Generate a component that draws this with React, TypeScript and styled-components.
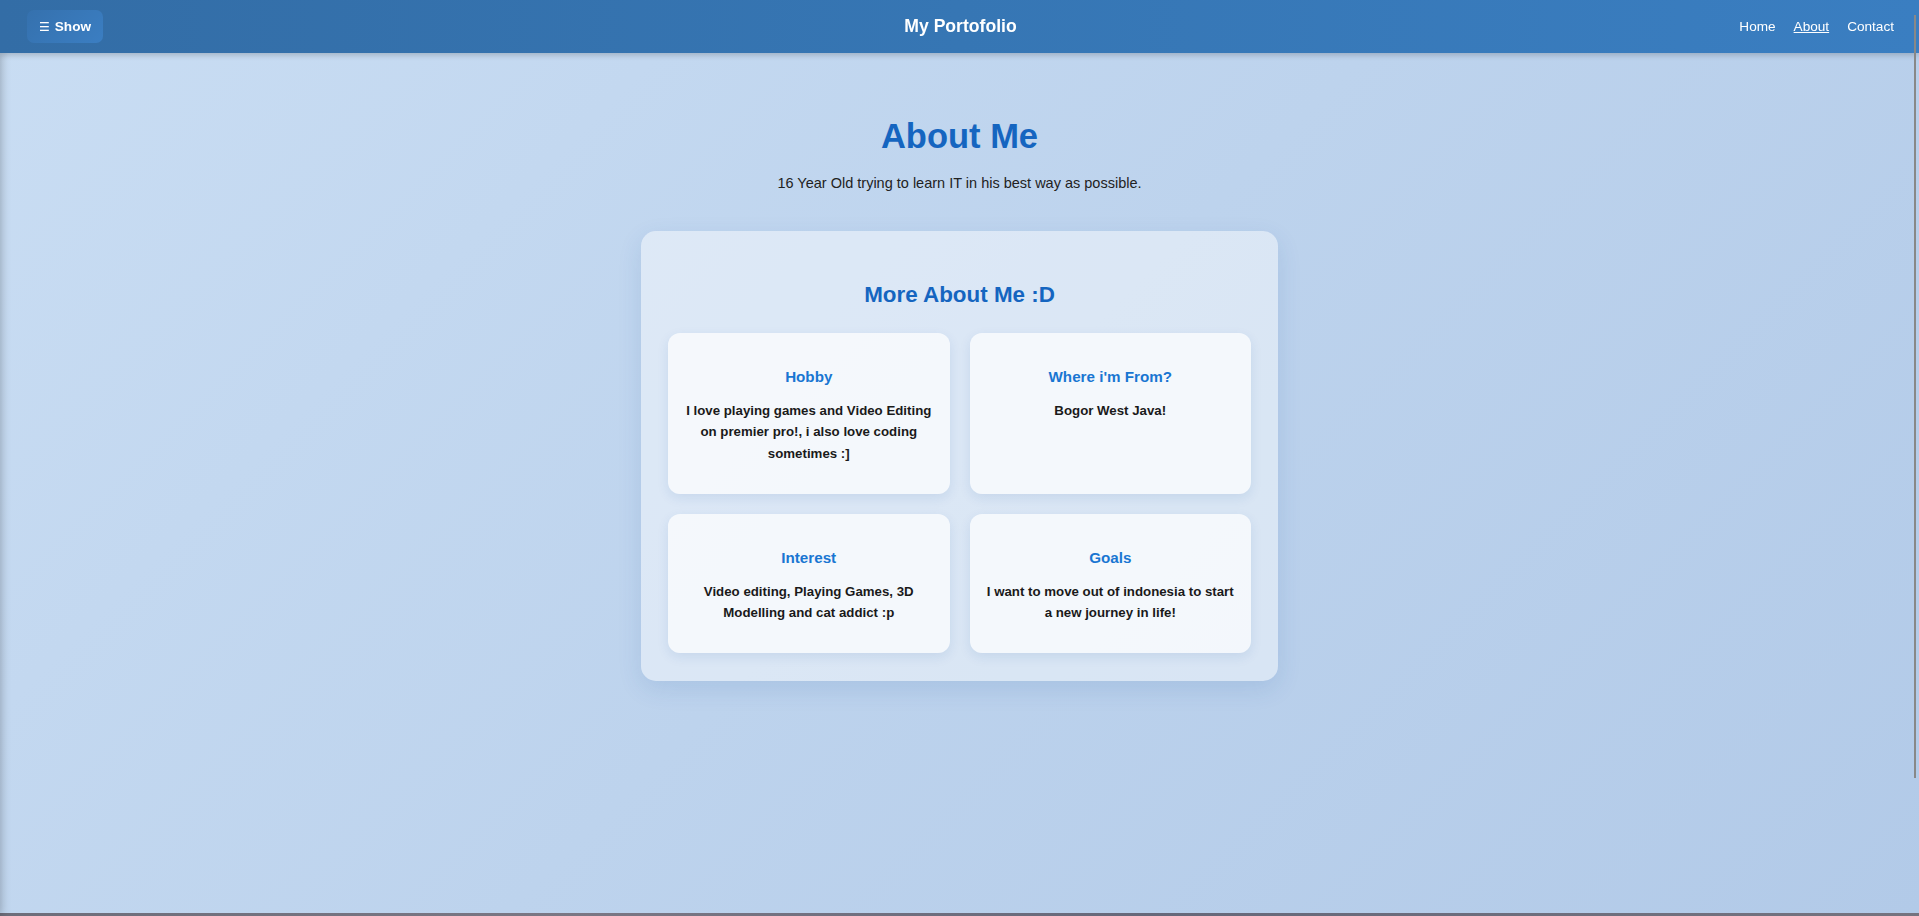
import React from "react";
import styled, { createGlobalStyle } from "styled-components";

const GlobalStyle = createGlobalStyle`
  *, *::before, *::after { box-sizing: border-box; }
  html, body { margin: 0; padding: 0; height: 100%; overflow: hidden; }
  body { font-family: "Liberation Sans", Arial, sans-serif; color: #1f1f1f; }
  #root { height: 100%; }
`;

const Shell = styled.div`
  height: 100vh;
  display: flex;
  flex-direction: column;
  background: linear-gradient(135deg, #c9ddf3 0%, #bdd3ed 50%, #b2cae8 100%);
`;

const Sidebar = styled.aside`
  position: fixed;
  top: 0;
  left: -250px;
  width: 250px;
  height: 100%;
  background: #2f6aa3;
  box-shadow: 0 0 10px rgba(0, 0, 0, 0.3);
  z-index: 5;
`;

const Header = styled.header`
  position: relative;
  z-index: 10;
  flex: none;
  height: 53px;
  display: grid;
  grid-template-columns: 1fr auto 1fr;
  align-items: center;
  padding: 0 25px 0 27px;
  background: linear-gradient(90deg, #336da6 0%, #3676b4 50%, #3a7ec1 100%);
  box-shadow: 0 2px 6px rgba(0, 0, 0, 0.2);
  color: #fff;
`;

const MenuButton = styled.button`
  justify-self: start;
  height: 33px;
  display: flex;
  align-items: center;
  gap: 5px;
  padding: 0 12px;
  border: none;
  border-radius: 7px;
  background: linear-gradient(135deg, #3571ae, #3b7ec2);
  color: #fff;
  font-family: "Liberation Sans", Arial, sans-serif;
  font-size: 13.6px;
  font-weight: bold;
  cursor: pointer;
`;

const MenuGlyph = styled.span`
  font-family: "DejaVu Sans", sans-serif;
  font-weight: normal;
  font-size: 12px;
`;

const Brand = styled.div`
  font-size: 17.6px;
  font-weight: bold;
`;

const Nav = styled.nav`
  justify-self: end;
  display: flex;
  gap: 18px;
`;

const NavLink = styled.a<{ $active?: boolean }>`
  color: #fff;
  font-size: 13.6px;
  text-decoration: ${(p) => (p.$active ? "underline" : "none")};
  cursor: pointer;
`;

const Main = styled.main`
  flex: 1;
  display: flex;
  flex-direction: column;
  align-items: center;
  padding-top: 64px;
`;

const Title = styled.h1`
  margin: 0 0 19px;
  font-size: 34.5px;
  font-weight: bold;
  color: #1565c0;
`;

const Lead = styled.p`
  margin: 0 0 40px;
  font-size: 14.5px;
  color: #222;
`;

const Panel = styled.section`
  width: 637px;
  padding: 28px 27px;
  border-radius: 15px;
  background: rgba(255, 255, 255, 0.45);
  box-shadow: 0 8px 24px rgba(21, 80, 160, 0.12);
`;

const PanelTitle = styled.h2`
  margin: 23px 0 25px;
  text-align: center;
  font-size: 22.4px;
  font-weight: bold;
  color: #1565c0;
`;

const CardGrid = styled.div`
  display: grid;
  grid-template-columns: 1fr 1fr;
  gap: 20px;
`;

const Card = styled.article`
  padding: 20px 15px;
  border-radius: 12px;
  text-align: center;
  background: rgba(255, 255, 255, 0.7);
  box-shadow: 0 4px 12px rgba(21, 80, 160, 0.1);
`;

const CardTitle = styled.h3`
  margin: 15px 0;
  font-size: 15.2px;
  font-weight: bold;
  color: #1976d2;
`;

const CardText = styled.p`
  margin: 0 0 10px;
  font-size: 13.28px;
  font-weight: bold;
  line-height: 1.6;
  color: #1a1a1a;
`;

const ScrollThumb = styled.div`
  position: fixed;
  top: 15px;
  right: 3px;
  width: 2px;
  height: 763px;
  background: #888;
  z-index: 20;
`;

const BottomEdge = styled.div`
  flex: none;
  height: 3px;
  background: linear-gradient(90deg, #6d6d7a, #7b7784 30%, #66687a 60%, #75737f);
`;

const cards = [
  {
    title: "Hobby",
    text: "I love playing games and Video Editing on premier pro!, i also love coding sometimes :]",
  },
  { title: "Where i'm From?", text: "Bogor West Java!" },
  {
    title: "Interest",
    text: "Video editing, Playing Games, 3D Modelling and cat addict :p",
  },
  {
    title: "Goals",
    text: "I want to move out of indonesia to start a new journey in life!",
  },
];

export default function App() {
  return (
    <>
      <GlobalStyle />
      <Shell>
        <Sidebar />
        <Header>
          <MenuButton>
            <MenuGlyph>☰</MenuGlyph>
            Show
          </MenuButton>
          <Brand>My Portofolio</Brand>
          <Nav>
            <NavLink>Home</NavLink>
            <NavLink $active>About</NavLink>
            <NavLink>Contact</NavLink>
          </Nav>
        </Header>
        <Main>
          <Title>About Me</Title>
          <Lead>16 Year Old trying to learn IT in his best way as possible.</Lead>
          <Panel>
            <PanelTitle>More About Me :D</PanelTitle>
            <CardGrid>
              {cards.map((c) => (
                <Card key={c.title}>
                  <CardTitle>{c.title}</CardTitle>
                  <CardText>{c.text}</CardText>
                </Card>
              ))}
            </CardGrid>
          </Panel>
        </Main>
        <BottomEdge />
      </Shell>
      <ScrollThumb />
    </>
  );
}
